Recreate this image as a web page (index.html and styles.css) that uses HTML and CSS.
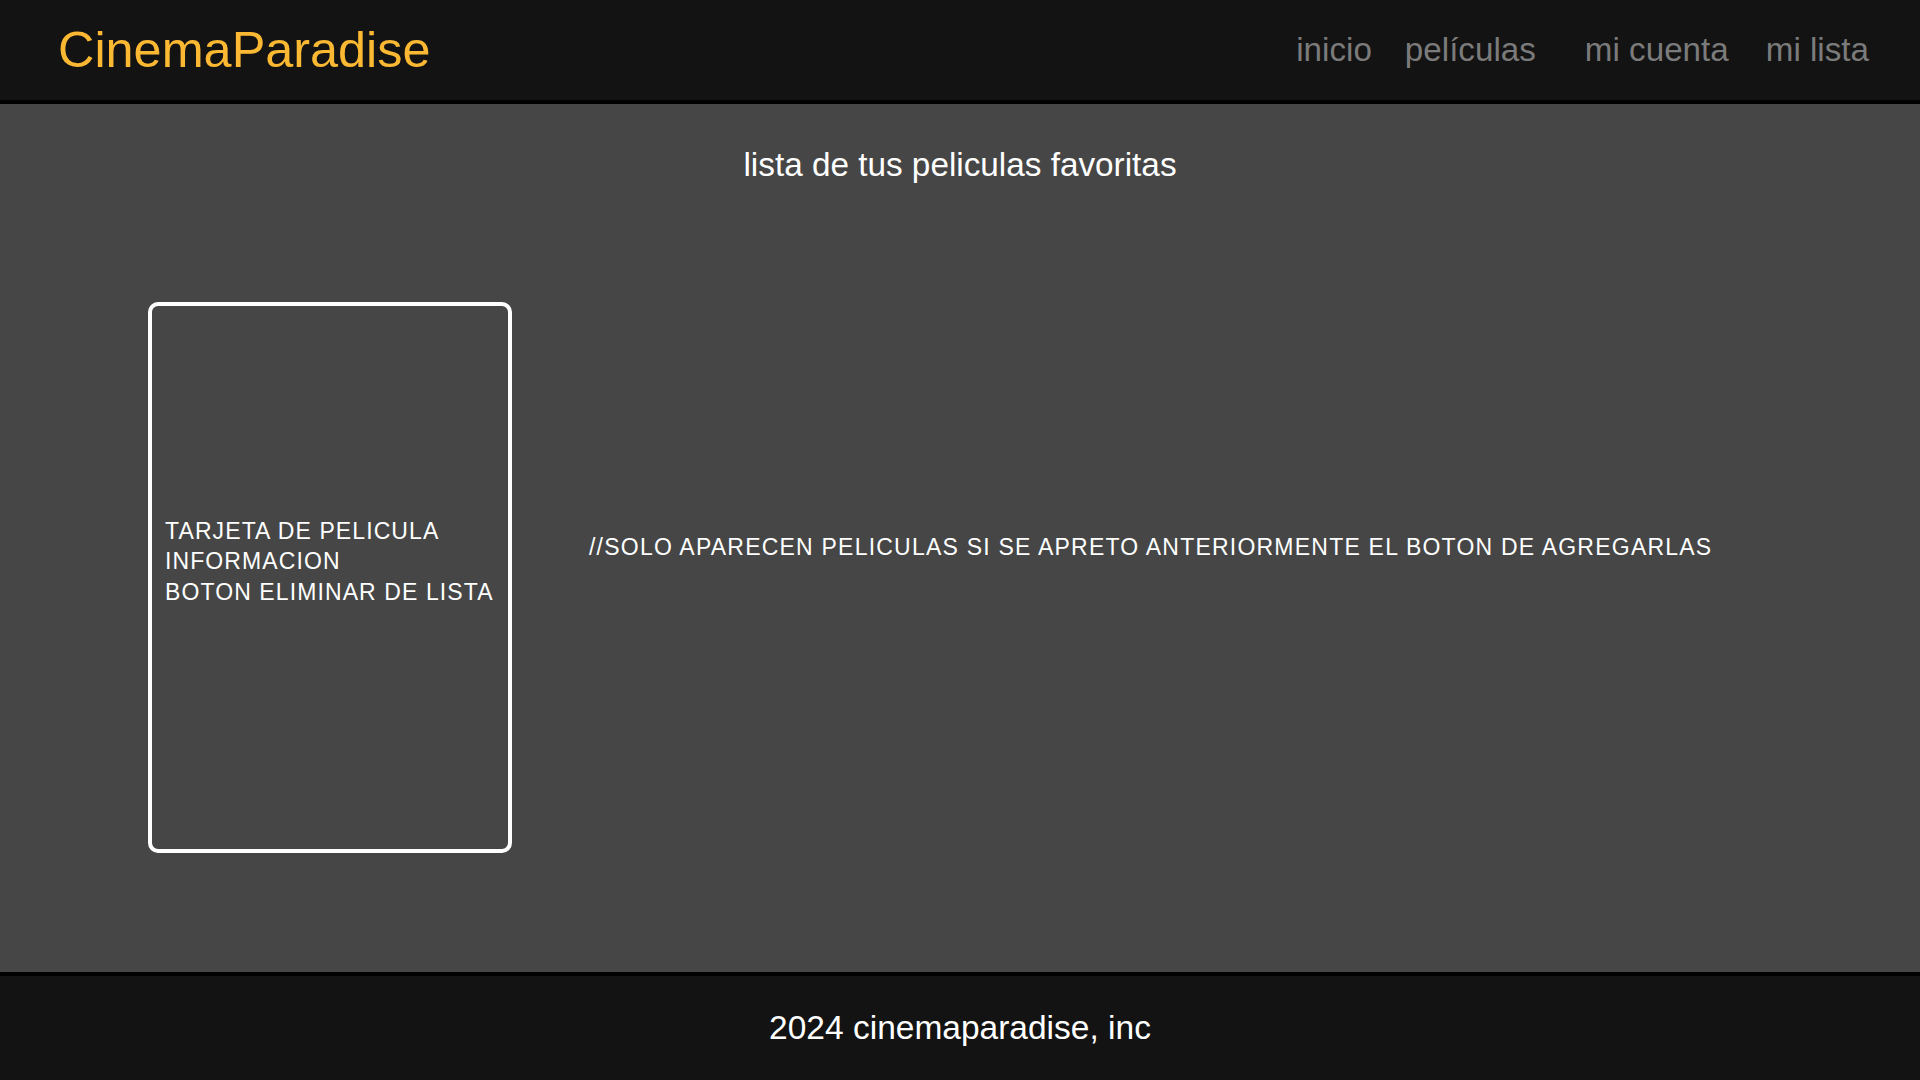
FILE: index.html
```html
<!DOCTYPE html>
<html lang="es">
<head>
<meta charset="utf-8">
<title>CinemaParadise - mi lista</title>
<link rel="stylesheet" href="styles.css">
</head>
<body>
<header class="site-header">
  <div class="logo">CinemaParadise</div>
  <nav class="nav">
    <a class="nav-link" href="#">inicio</a>
    <a class="nav-link" href="#">películas</a>
    <a class="nav-link nav-link-wide" href="#">mi cuenta</a>
    <a class="nav-link nav-link-mid" href="#">mi lista</a>
  </nav>
</header>
<main class="content">
  <h1 class="page-title">lista de tus peliculas favoritas</h1>
  <section class="list-row">
    <div class="movie-card">
      <p class="card-text">TARJETA DE PELICULA<br>INFORMACION<br>BOTON ELIMINAR DE LISTA</p>
    </div>
    <p class="note">//SOLO APARECEN PELICULAS SI SE APRETO ANTERIORMENTE EL BOTON DE AGREGARLAS</p>
  </section>
</main>
<footer class="site-footer">2024 cinemaparadise, inc</footer>
</body>
</html>
```
FILE: styles.css
```css
html, body {
  margin: 0;
  padding: 0;
}
body {
  width: 1920px;
  height: 1080px;
  display: flex;
  flex-direction: column;
  background: #464646;
  font-family: "Liberation Sans", Arial, sans-serif;
  color: #ffffff;
  overflow: hidden;
}
.site-header {
  height: 100px;
  flex: 0 0 100px;
  background: #131313;
  border-bottom: 4px solid #000000;
  display: flex;
  align-items: center;
  justify-content: space-between;
  padding: 0 51px 0 58px;
}
.logo {
  font-size: 50.4px;
  line-height: 96px;
  color: #fbb933;
}
.nav {
  display: flex;
  gap: 33px;
  align-items: center;
}
.nav-link {
  font-size: 33.2px;
  line-height: 100px;
  color: #7b7b7b;
  text-decoration: none;
}
.nav-link-wide {
  margin-left: 16px;
}
.nav-link-mid {
  margin-left: 4px;
}
.content {
  flex: 1;
  display: flex;
  flex-direction: column;
}
.page-title {
  margin: 41px 0 0 0;
  font-size: 33.3px;
  font-weight: normal;
  line-height: 40px;
  text-align: center;
}
.list-row {
  display: flex;
  align-items: flex-start;
  gap: 77px;
  margin-top: 117px;
  padding-left: 148px;
}
.movie-card {
  flex: 0 0 auto;
  box-sizing: content-box;
  width: 343px;
  height: 511px;
  border: 4px solid #ffffff;
  border-radius: 10px;
  display: flex;
  align-items: center;
  padding: 0 0 32px 13px;
}
.card-text {
  margin: 0;
  font-size: 23px;
  letter-spacing: 1.1px;
  line-height: 30.6px;
}
.note {
  margin: 230px 0 0 0;
  font-size: 23px;
  letter-spacing: 1.22px;
  line-height: 30px;
  white-space: nowrap;
}
.site-footer {
  flex: 0 0 104px;
  height: 104px;
  background: #131313;
  border-top: 4px solid #000000;
  display: flex;
  align-items: center;
  justify-content: center;
  font-size: 33.5px;
}
```
